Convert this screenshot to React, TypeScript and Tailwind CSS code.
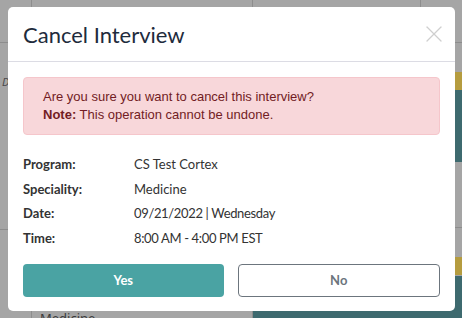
import { X } from "lucide-react";

const details = [
	{ label: "Program:", value: "CS Test Cortex", tight: false },
	{ label: "Speciality:", value: "Medicine", tight: false },
	{ label: "Date:", value: "09/21/2022 | Wednesday", tight: true },
	{ label: "Time:", value: "8:00 AM - 4:00 PM EST", tight: true },
];

const Backdrop = () => {
	return (
		<div className="flex h-full w-full bg-[#a5a5a5]">
			<div className="flex w-[32px] flex-col border-r border-[#8d8d8d]">
				<div className="h-[43px] border-b border-[#8d8d8d]" />
				<div className="pt-[32px] pl-[2px] text-[11px] italic leading-[14px] text-[#4a4a4a]">D</div>
				<div className="h-[141px] border-b border-[#8d8d8d]" />
			</div>
			<div className="flex w-[221px] flex-col justify-end border-r border-[#8d8d8d] pl-[8px]">
				<span className="translate-y-[8px] text-[13px] leading-[16px] text-[#3b3b3b]">Medicine</span>
			</div>
			<div className="flex flex-1 flex-col">
				<div className="flex flex-1">
					<div className="flex w-[168px] flex-col border-r border-[#8d8d8d]">
						<div className="h-[43px] border-b border-[#8d8d8d]" />
					</div>
					<div className="flex flex-1 flex-col">
						<div className="h-[43px] border-b border-[#8d8d8d]" />
						<div className="h-[29px]" />
						<div className="h-[18px] bg-[#b59c3f]" />
						<div className="h-[72px] bg-[#3e6a6f]" />
						<div className="h-[66px] border-b border-[#8d8d8d]" />
						<div className="h-[29px]" />
						<div className="h-[18px] bg-[#b59c3f]" />
					</div>
				</div>
				<div className="h-[42px] bg-[#3e6a6f]" />
			</div>
		</div>
	);
};

const App = () => {
	return (
		<div className="relative h-[318px] w-[462px] overflow-hidden">
			<Backdrop />
			<div className="absolute left-[8px] top-[7px] flex h-[304px] w-[447px] flex-col rounded-[5px] bg-white font-['Lato',sans-serif]">
				<div className="flex h-[55px] items-center justify-between border-b border-[#dcdce4] pl-[15px] pr-[7px]">
					<h2 className="text-[22px] font-normal text-[#1e2b3c]">Cancel Interview</h2>
					<X className="h-[28px] w-[28px] text-[#cfcfcf]" strokeWidth={1.1} />
				</div>
				<div className="flex flex-1 flex-col px-[15px] pt-[15px] pb-[14px]">
					<div className="rounded-[4px] border border-[#f5c6cb] bg-[#f8d7da] px-[19px] py-[10px] font-['Liberation_Sans',Arial,sans-serif] text-[13px] leading-[18px] text-[#721c24]">
						<p>Are you sure you want to cancel this interview?</p>
						<p>
							<span className="font-bold">Note:</span> This operation cannot be undone.
						</p>
					</div>
					<div className="mt-[20px] flex flex-col gap-[6.5px] text-[13px] leading-[18px] text-[#333333]">
						{details.map((d) => (
							<div key={d.label} className="flex">
								<span className="w-[111px] font-bold">{d.label}</span>
								<span className={d.tight ? "tracking-[-0.35px]" : ""}>{d.value}</span>
							</div>
						))}
					</div>
					<div className="mt-auto flex gap-[14px]">
						<button className="h-[33px] flex-1 rounded-[4px] bg-[#4aa3a3] text-[13px] font-bold text-white">Yes</button>
						<button className="h-[33px] flex-1 rounded-[4px] border border-[#6c757d] bg-white text-[13px] font-bold text-[#6c757d]">No</button>
					</div>
				</div>
			</div>
		</div>
	);
};

export default App;
